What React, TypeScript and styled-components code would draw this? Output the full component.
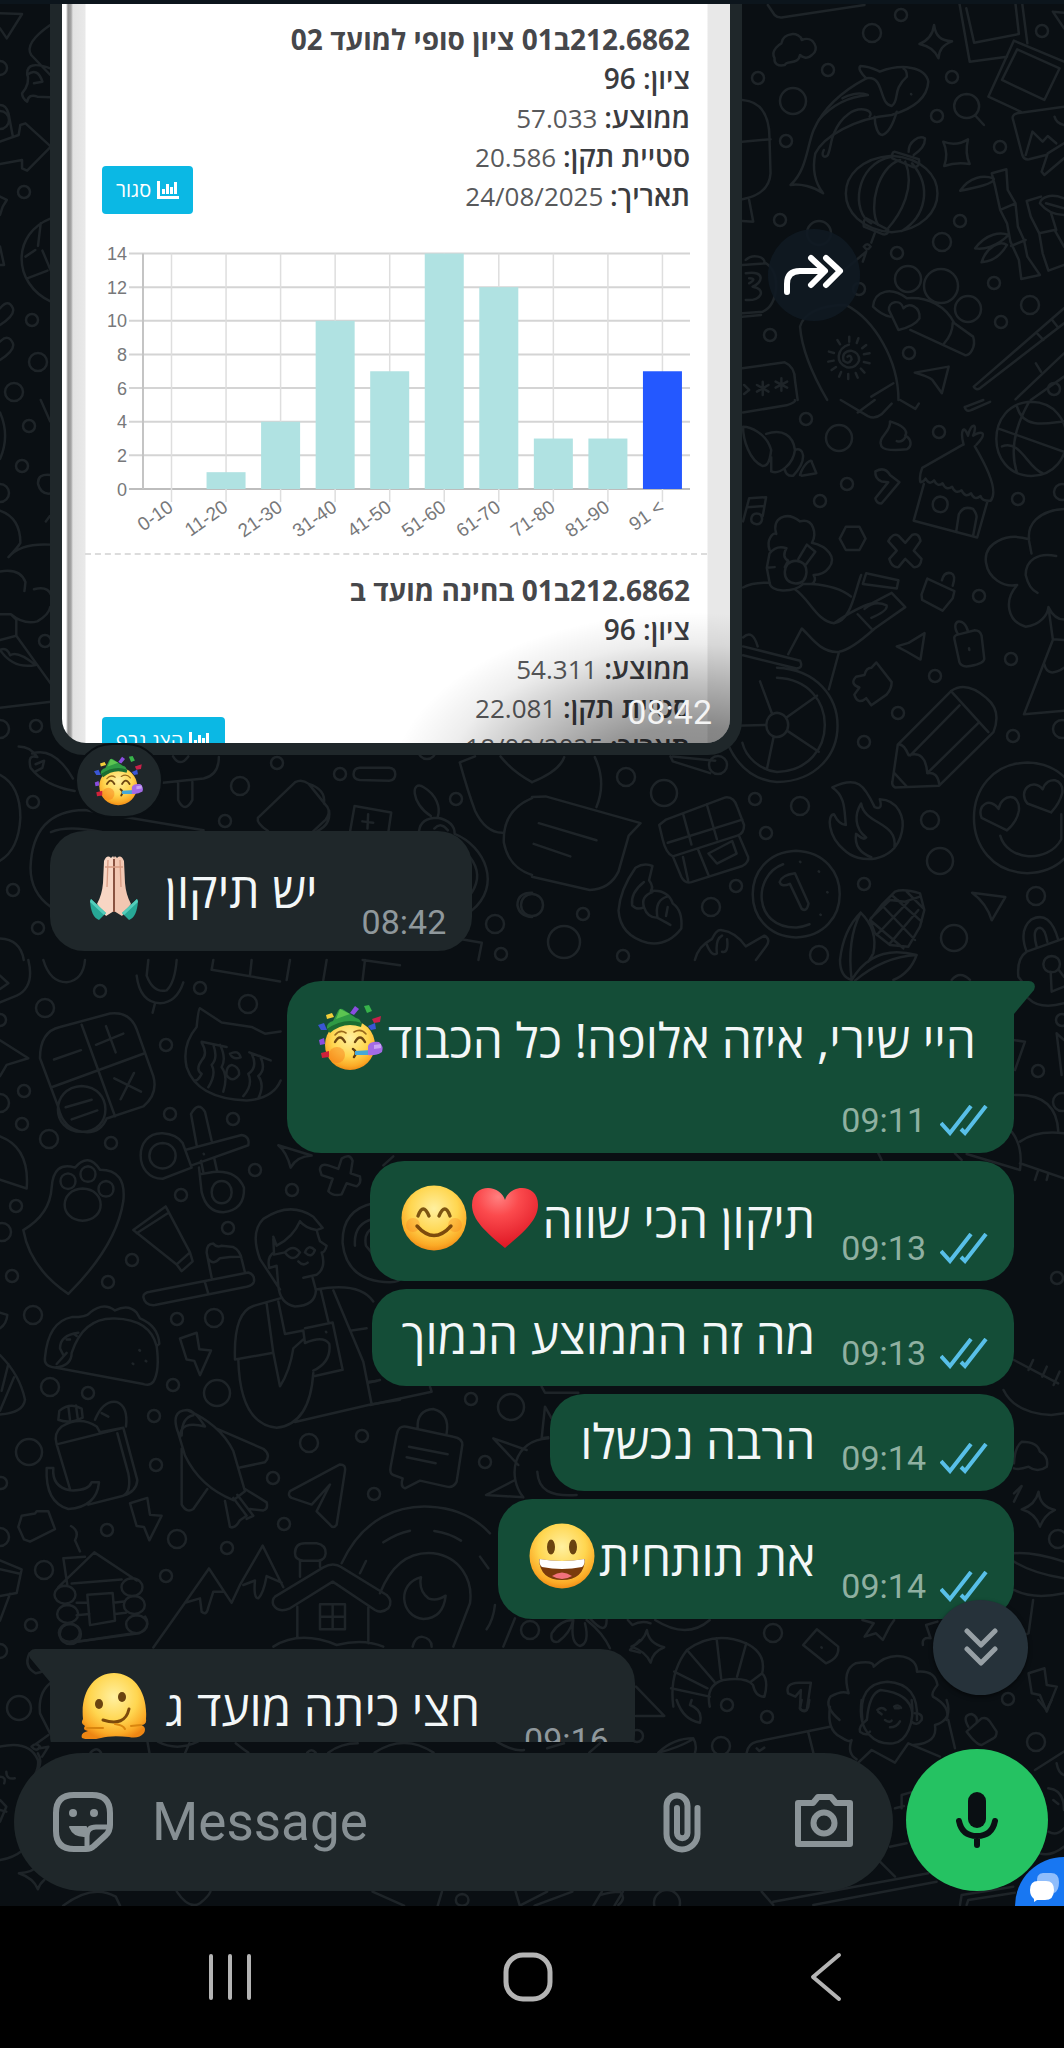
import React from "react";
import styled, { createGlobalStyle, css } from "styled-components";

const GlobalStyle = createGlobalStyle`
  *, *::before, *::after { box-sizing: border-box; }
  html, body { margin: 0; padding: 0; background: #000; }
  button { border: 0; padding: 0; margin: 0; background: none; cursor: pointer; font: inherit; color: inherit; }
`;

const HEBREW = '"Open Sans", "Noto Sans", "DejaVu Sans", sans-serif';
const LATIN = 'Roboto, "Noto Sans", sans-serif';

/* ---------- shell ---------- */

const Screen = styled.div`
  display: flex;
  flex-direction: column;
  height: 100vh;
  background: #0a0f13;
  font-family: ${LATIN};
  overflow: hidden;
`;

const Conversation = styled.main`
  position: relative;
  isolation: isolate;
  flex: 1;
  min-height: 0;
  display: flex;
  flex-direction: column;
  overflow: hidden;
  border-top: 4px solid #0c151c;
`;

const WallpaperSvg = styled.svg`
  position: absolute;
  z-index: -1;
  left: 0;
  top: -4px;
  width: 1064px;
  height: 1910px;
  fill: none;
  stroke: #1e2428;
  stroke-width: 2.5;
  stroke-linecap: round;
  stroke-linejoin: round;
  path, rect, ellipse, circle { vector-effect: non-scaling-stroke; }
`;

const MessageList = styled.section`
  position: relative;
  flex: 1;
  min-height: 0;
  overflow: hidden;
  padding: 0 50px;
  display: flex;
  flex-direction: column;
`;

const Row = styled.div<{ $out?: boolean; $space?: number }>`
  display: flex;
  flex: none;
  justify-content: ${(p) => (p.$out ? "flex-end" : "flex-start")};
  margin-top: ${(p) => p.$space ?? 8}px;
`;

/* ---------- bubbles ---------- */

const Bubble = styled.div<{ $out?: boolean; $stack?: boolean; $tail?: boolean }>`
  position: relative;
  display: flex;
  flex-direction: ${(p) => (p.$stack ? "column" : "row")};
  align-items: flex-end;
  gap: ${(p) => (p.$stack ? 22 : p.$out ? 26 : 44)}px;
  padding: 14px 26px ${(p) => (p.$out ? 18 : 14)}px 30px;
  border-radius: 34px;
  background: ${(p) => (p.$out ? "#144d37" : "#1f272a")};
  ${(p) => p.$tail && (p.$out
    ? css`border-top-right-radius: 0;`
    : css`border-top-left-radius: 0;`)}
`;

const Tail = styled.svg<{ $out?: boolean }>`
  position: absolute;
  top: 0;
  width: 21px;
  height: 33px;
  ${(p) => (p.$out ? "left: 100%; fill: #144d37;" : "right: 100%; fill: #1f272a; transform: scaleX(-1);")}
`;

const Text = styled.p<{ $out?: boolean; $stack?: boolean }>`
  margin: 0;
  padding: 0 ${(p) => (p.$stack ? 12 : 0)}px ${(p) => (p.$out ? 0 : 4)}px 0;
  display: flex;
  align-items: center;
  direction: rtl;
  font-family: ${HEBREW};
  font-size: 48px;
  line-height: 65px;
  color: #f3f7f8;
  white-space: pre;
`;

const EmojiSvg = styled.svg<{ $size?: number }>`
  flex: none;
  display: block;
  width: ${(p) => p.$size ?? 66}px;
  height: ${(p) => p.$size ?? 66}px;
`;

const EmojiSlot = styled.span<{ $apart?: boolean }>`
  display: block;
  margin: 10px ${(p) => (p.$apart ? 18 : 4)}px 12px 1px;
`;

const Meta = styled.span<{ $out?: boolean }>`
  display: flex;
  align-items: center;
  gap: 14px;
  height: 30px;
  font-size: 34px;
  line-height: 30px;
  color: ${(p) => (p.$out ? "#8fb0a1" : "#8f989c")};
`;

const TickSvg = styled.svg`
  width: 48px;
  height: 31px;
  fill: none;
  stroke: #58bfe8;
  stroke-width: 4;
`;

/* ---------- shared picture ---------- */

const PhotoBubble = styled.div`
  position: relative;
  flex: 0 1 692px;
  padding: 0 12px 12px;
  background: #1f272a;
  border-radius: 0 0 34px 34px;
`;

const Photo = styled.div`
  position: relative;
  height: 739px;
  overflow: hidden;
  border-radius: 0 0 24px 24px;
  background: linear-gradient(90deg, #fff 4px, #8f8f8f 6px, #a4a4a4 9px, #e2e2e2 11px, #e9e9e9 23px, #fff 24px, #fff calc(100% - 23px), #e8e8e8 calc(100% - 22px));
`;

const Shade = styled.div`
  position: absolute;
  inset: 0;
  background: radial-gradient(ellipse 300px 175px at 94% 106%, rgba(0, 0, 0, 0.48) 0%, rgba(0, 0, 0, 0.42) 35%, rgba(0, 0, 0, 0.24) 60%, rgba(0, 0, 0, 0.07) 82%, rgba(0, 0, 0, 0) 100%);
`;

const PhotoTime = styled.span`
  position: absolute;
  right: 18px;
  bottom: 13px;
  font-size: 34px;
  line-height: 36px;
  color: #f4f4f4;
`;

const Grade = styled.div`
  display: flex;
  direction: rtl;
  justify-content: space-between;
  align-items: flex-end;
  padding: 16px 40px 0;
`;

const GradeText = styled.div`
  font-family: ${HEBREW};
  font-size: 26px;
  line-height: 39px;
  color: #58595b;
  white-space: nowrap;
`;

const GradeTitle = styled.h2`
  margin: 0;
  height: 39px;
  font-size: 28px;
  font-weight: 700;
  color: #46474a;
`;

const GradeLine = styled.p<{ $strong?: boolean }>`
  margin: 0;
  height: 39px;
  font-size: ${(p) => (p.$strong ? 28 : 26)}px;
  font-weight: ${(p) => (p.$strong ? 600 : 400)};
  color: ${(p) => (p.$strong ? "#3b3c3f" : "#58595b")};
  b { font-size: 28px; font-weight: 600; color: #3b3c3f; }
`;

const GraphButton = styled.button`
  display: flex;
  align-items: center;
  gap: 6px;
  height: 48px;
  padding: 0 14px;
  margin-bottom: 1px;
  border-radius: 4px;
  background: #0bb8e4;
  color: #fff;
  font-family: ${HEBREW};
  font-size: 20px;
  line-height: 24px;
  svg { width: 22px; height: 18px; fill: #fff; }
`;

const ChartSvg = styled.svg`
  display: block;
  width: 100%;
  height: 338px;
  font-family: "Liberation Sans", Arial, sans-serif;
  font-size: 18px;
  text { fill: #77787a; text-anchor: end; }
`;

const Divider = styled.hr`
  margin: 0 23px;
  border: 0;
  border-top: 2px dashed #dcdcdc;
`;

const Reaction = styled.button`
  position: absolute;
  left: 25px;
  bottom: -63px;
  display: grid;
  place-items: center;
  width: 88px;
  height: 75px;
  border: 2px solid #0a0f13;
  border-radius: 37px;
  background: #1f272a;
`;

const ForwardButton = styled.button`
  display: grid;
  place-items: center;
  width: 92px;
  height: 92px;
  margin: 225px 0 0 26px;
  border-radius: 50%;
  background: rgba(15, 25, 34, 0.9);
  svg { width: 62px; height: 42px; fill: none; stroke: #fff; stroke-width: 6; stroke-linecap: round; stroke-linejoin: round; }
`;

const ScrollDown = styled.button`
  position: absolute;
  right: 36px;
  bottom: 47px;
  display: grid;
  place-items: center;
  width: 95px;
  height: 95px;
  border-radius: 50%;
  background: #26323a;
  box-shadow: 0 2px 4px rgba(0, 0, 0, 0.5);
  svg { width: 36px; height: 40px; fill: none; stroke: #97a0a5; stroke-width: 5; stroke-linecap: round; stroke-linejoin: round; }
`;

/* ---------- composer ---------- */

const Composer = styled.form`
  display: flex;
  align-items: flex-end;
  gap: 13px;
  padding: 7px 16px 15px 14px;
`;

const Field = styled.div`
  flex: 1;
  min-width: 0;
  display: flex;
  align-items: center;
  height: 138px;
  padding: 0 38px;
  border-radius: 69px;
  background: #1f272a;
`;

const IconButton = styled.button<{ $gap?: number }>`
  flex: none;
  display: grid;
  place-items: center;
  margin-left: ${(p) => p.$gap ?? 0}px;
  svg { display: block; width: 62px; height: 62px; fill: none; stroke: #8b9498; stroke-width: 6; stroke-linecap: round; stroke-linejoin: round; }
`;

const MessageInput = styled.input`
  flex: 1;
  min-width: 0;
  height: 80px;
  margin-left: 38px;
  padding: 0;
  border: 0;
  outline: 0;
  background: transparent;
  font-family: ${LATIN};
  font-size: 53px;
  line-height: 64px;
  color: #f3f7f8;
  &::placeholder { color: #868f93; opacity: 1; }
`;

const MicButton = styled.button`
  flex: none;
  display: grid;
  place-items: center;
  width: 142px;
  height: 142px;
  border-radius: 50%;
  background: #25c262;
  svg { width: 42px; height: 58px; fill: none; stroke: #0a0f13; stroke-width: 6; stroke-linecap: round; }
`;

const ChatHead = styled.button`
  position: absolute;
  right: -49px;
  bottom: -49px;
  width: 98px;
  height: 98px;
  border-radius: 50%;
  background: #1877f2;
  svg { display: block; margin: -34px 0 0 14px; width: 32px; height: 32px; }
`;

const NavBar = styled.nav`
  display: flex;
  justify-content: space-around;
  align-items: center;
  height: 142px;
  padding: 0 89px 0 82px;
  background: #000;
`;

const NavButton = styled.button`
  display: grid;
  place-items: center;
  width: 120px;
  height: 90px;
  svg { width: 52px; height: 52px; fill: none; stroke: #b4b4b4; stroke-width: 4; stroke-linecap: round; stroke-linejoin: round; }
`;

/* ---------- emoji ---------- */

const faceFill = (id: string) => (
  <defs>
    <radialGradient id={id} cx="50%" cy="36%" r="66%">
      <stop offset="0" stopColor="#fff0a0" />
      <stop offset="0.55" stopColor="#ffd650" />
      <stop offset="0.85" stopColor="#fbaa26" />
      <stop offset="1" stopColor="#ee8613" />
    </radialGradient>
  </defs>
);

const Party = ({ id, size }: { id: string; size?: number }) => (
  <EmojiSvg $size={size} viewBox="0 0 66 66" role="img" aria-label="partying face">
    {faceFill(id)}
    <circle cx="32" cy="40" r="25" fill={`url(#${id})`} />
    <circle cx="19" cy="50" r="8" fill="#f7791b" opacity="0.45" />
    <path d="M9 24 Q8 18 15 16 L20 6 Q22 2 26 5 L38 13 Q43 14 43 19 Q26 15 9 24Z" fill="#2f9a44" />
    <path d="M9 24 Q26 12 44 18 L43 22 Q26 16 12 28Z" fill="#1c6d31" />
    <path d="M22 4 L32 9 L18 14Z" fill="#5cc451" />
    <path d="M17 30 Q22 24 28 28 M36 27 Q43 23 48 29" fill="none" stroke="#9a6a1c" strokeWidth="1.6" strokeLinecap="round" />
    <path d="M17 37 Q22 28 27 37 M37 37 Q42 28 47 37" fill="none" stroke="#6e4712" strokeWidth="2.4" strokeLinecap="round" />
    <path d="M35 44 Q40 47 36 52" fill="none" stroke="#5f3a0e" strokeWidth="2.5" strokeLinecap="round" />
    <path d="M37 46 L54 45 L54 50 L37 50Z" fill="#46a8d8" />
    <path d="M50 41 Q52 36 61 37 Q66 41 64 47 Q58 51 50 50Z" fill="#a36be6" />
    <path d="M56 40 L63 39 L63 43 L56 44Z" fill="#c9a2f7" />
    <path d="M32 8 L37 1 L41 4 L36 10Z" fill="#8a4de0" />
    <path d="M46 1 L51 0 L54 6 L49 8Z" fill="#37b34a" />
    <path d="M54 14 L63 11 L62 17 L56 18Z" fill="#c9204a" />
    <path d="M50 21 L57 18 L58 24 L53 25Z" fill="#3a56d4" />
    <path d="M0 20 L6 18 L9 25 L3 25Z" fill="#3a56d4" />
    <path d="M1 35 L6 33 L7 39 L2 40Z" fill="#8a4de0" />
    <path d="M3 48 L11 46 L11 52 L4 53Z" fill="#d0213a" />
    <path d="M8 10 L14 8 L16 12 L9 14Z" fill="#f3cf3a" />
  </EmojiSvg>
);

const Pray = () => (
  <EmojiSvg viewBox="0 0 66 66" role="img" aria-label="folded hands">
    <path d="M30 3 Q33 -1 33 4 L33 56 L25 61 L16 49 Q21 40 22 28 L23 6 Q26 -1 30 3Z" fill="#f8d6c4" />
    <path d="M36 3 Q33 -1 33 4 L33 56 L41 61 L50 49 Q45 40 44 28 L43 6 Q40 -1 36 3Z" fill="#f2c7b2" />
    <path d="M33 4 L33 57" stroke="#8a5240" strokeWidth="2" />
    <path d="M27 5 L26 32 M39 5 L40 32 M24 12 L33 12 L42 12" stroke="#d89c83" strokeWidth="1.3" fill="none" />
    <path d="M10 44 L25 58 L18 65 Q10 62 9 46Z" fill="#27a896" />
    <path d="M56 44 L41 58 L48 65 Q56 62 57 46Z" fill="#27a896" />
    <path d="M10 44 L25 58 L23 60 L9 47Z M56 44 L41 58 L43 60 L57 47Z" fill="#54cdbb" />
  </EmojiSvg>
);

const Smile = () => (
  <EmojiSvg viewBox="0 0 66 66" role="img" aria-label="smiling face with smiling eyes">
    {faceFill("smile")}
    <circle cx="33" cy="33" r="32.5" fill="url(#smile)" />
    <circle cx="12" cy="40" r="7" fill="#f7791b" opacity="0.3" />
    <circle cx="54" cy="40" r="7" fill="#f7791b" opacity="0.3" />
    <path d="M17 31 Q22 17 28 31 M38 31 Q44 17 49 31" fill="none" stroke="#7c5411" strokeWidth="3.4" strokeLinecap="round" />
    <path d="M16 41 Q33 60 50 41" fill="none" stroke="#7c4a0c" strokeWidth="3.4" strokeLinecap="round" />
  </EmojiSvg>
);

const Heart = () => (
  <EmojiSvg viewBox="0 0 66 66" role="img" aria-label="red heart">
    <defs>
      <radialGradient id="heart" cx="40%" cy="15%" r="90%">
        <stop offset="0" stopColor="#ff8080" />
        <stop offset="0.35" stopColor="#fb4a4d" />
        <stop offset="1" stopColor="#dc1220" />
      </radialGradient>
    </defs>
    <path d="M33 63 C14 47 0 35 0 20 C0 8 8 3 16 3 C24 3 31 8 33 15 C35 8 42 3 50 3 C58 3 66 8 66 20 C66 35 52 47 33 63Z" fill="url(#heart)" />
  </EmojiSvg>
);

const Grin = () => (
  <EmojiSvg viewBox="0 0 66 66" role="img" aria-label="grinning face">
    {faceFill("grin")}
    <circle cx="33" cy="33" r="32.5" fill="url(#grin)" />
    <ellipse cx="22" cy="24" rx="4" ry="7.5" fill="#6a4310" />
    <ellipse cx="44" cy="24" rx="4" ry="7.5" fill="#6a4310" />
    <path d="M10 36 Q33 40 56 36 Q55 57 33 57 Q11 57 10 36Z" fill="#7a3a0c" />
    <path d="M10.500 36 Q33 40 55.500 36 Q56 42 53 44 Q33 48 13 44 Q10 42 10.500 36Z" fill="#fff" />
    <path d="M23 53 Q33 46 43 53 Q33 59 23 53Z" fill="#f2727c" />
  </EmojiSvg>
);

const Melting = () => (
  <EmojiSvg viewBox="0 0 66 66" role="img" aria-label="melting face">
    {faceFill("melt")}
    <path d="M2 46 C-1 18 14 0 33 0 C52 0 67 18 65 46 Q66 52 60 52 Q66 54 63 60 Q58 66 48 64 Q30 62 20 65 Q8 68 1 65 Q-1 60 7 58 Q1 57 4 53 Q-1 51 2 46Z" fill="url(#melt)" />
    <ellipse cx="18" cy="31" rx="4" ry="5" fill="#6a4310" />
    <ellipse cx="41" cy="24" rx="4" ry="5" fill="#6a4310" />
    <path d="M22 47 Q44 54 48 36" fill="none" stroke="#7c4a0c" strokeWidth="3" strokeLinecap="round" />
    <path d="M34 51 Q42 52 44 56 M6 55 L22 55 M50 53 L60 52" fill="none" stroke="#d9860f" strokeWidth="2" strokeLinecap="round" />
  </EmojiSvg>
);

const Ticks = () => (
  <TickSvg viewBox="0 0 48 31" role="img" aria-label="Read">
    <path d="M1 18 L10 28 L31 1 M21 24 L25 28 L46 1" />
  </TickSvg>
);

/* ---------- wallpaper ---------- */

const rings: [number, number, number][] = [
  [901,15,6],[872,33,9],[828,70,6],[758,78,6],[793,101,13],[786,141,6],[937,116,6],[952,77,6],[1042,31,6],[1000,147,6],[960,221,6],[942,242,9],[897,253,6],[780,220,6],[819,233,12],[994,283,6],[1030,305,9],[1001,322,6],[909,353,6],[770,335,6],[1054,389,6],[859,289,6],[908,279,13],[941,286,17],[968,309,13],
  [806,419,6],[839,438,13],[939,432,6],[847,484,6],[820,501,6],[1018,499,6],[979,596,6],[1011,659,6],[935,676,6],[898,713,6],[1013,736,6],[864,742,6],[626,777,9],[664,793,13],[755,799,6],[800,806,9],[766,833,6],[930,820,9],[940,861,13],[864,884,6],[736,886,6],[711,907,9],[583,914,6],[564,942,16],[532,905,11],[1036,896,9],[954,938,13],[623,956,6],[819,955,9],[718,765,9],[1062,729,9],[1062,492,8],
  [29,426,6],[22,466,6],[45,641,6],[36,726,6],[33,802,6],[13,890,6],[38,928,6],[240,786,9],[277,763,6],[225,821,6],[340,774,6],[456,799,6],[495,924,9],[501,954,6],[427,750,9],[0,493,9],[0,729,9],
  [24,192,6],[32,320,6],[38,362,9],[14,392,9],[0,120,9],[0,68,7],
  [100,991,6],[200,988,6],[45,1008,9],[248,1004,9],[166,1045,6],[24,1091,6],[22,1124,6],[49,1139,9],[111,1143,6],[170,1114,6],[233,1119,6],[255,1170,6],[181,1195,6],[292,1190,6],[228,1228,6],[132,1260,6],[12,1276,6],[108,1282,6],[33,1315,9],[16,1206,6],[177,1319,6],[214,1318,9],[50,1387,9],[88,1393,6],[173,1385,6],[217,1393,13],[154,1416,6],[156,1465,6],[29,1452,13],[309,1443,9],[362,1436,6],[273,1478,6],[284,1524,6],[374,1494,6],[107,1530,6],[177,1539,9],[227,1548,6],[44,1570,9],[166,1576,6],[31,1625,6],[2,1232,9],[0,1103,9],[0,1020,6],[1,1483,6],[0,1537,9],[0,1651,7],
  [471,1399,6],[511,1407,13],[485,1462,6],[530,1630,9],[773,1633,9],[727,1705,6],[1008,1699,6],[767,1717,6],[721,1746,9],[1036,1742,9],[667,1903,13],[637,1736,6],[19,1708,12],[1038,1071,6],[1062,1020,6],[1062,1102,9],[1058,1539,9],[1057,1278,6],
];

type Patch = { t: string; d: string[] };

const patches: Patch[] = [
  {
    t: "scale(0.3393 0.3333)",
    d: [
      "M0 40 L65 42 L20 115 L0 85",
      "M148 75 Q70 130 92 165 L148 225 M148 205 Q80 180 80 220 Q90 250 65 280 Q65 295 80 305 Q85 280 110 290 L148 292 M80 225 Q110 200 125 245 L100 250",
      "M0 315 Q18 315 25 340 L38 410 M0 425 L55 405 L60 375 L75 370 L150 440 L80 512 L65 505 L65 480 L0 492",
      "M0 590 L20 600 L8 620 L0 645 M0 740 L12 795 L0 795",
      "M150 655 C35 700 35 850 150 905 M120 670 L112 738 M75 770 L104 750 M125 752 L150 812 M80 835 L140 812",
      "M0 925 Q25 895 38 925 Q45 945 0 975 M0 1025 Q25 1000 38 1030 Q45 1050 0 1080",
    ],
  },
  {
    t: "translate(532 0) scale(0.3393 0.3333)",
    d: [
      "M695 15 L715 45 Q725 55 740 52 L980 15",
      "M715 175 C700 150 735 130 735 130 C740 95 790 95 795 120 C830 105 850 150 825 165 C810 180 795 170 790 165 C785 195 750 180 745 195 C725 200 712 190 715 175",
      "M1185 75 C1190 110 1205 122 1238 124 C1210 135 1200 150 1198 175 C1188 150 1170 138 1142 132 C1170 120 1182 100 1185 75Z",
      "M968 198 C1000 200 1010 208 1025 215 C1090 190 1160 200 1168 245 C1165 300 1110 330 1060 345 C950 355 860 410 835 460 C825 510 835 550 858 580 C830 560 790 550 762 555 C810 510 810 440 830 390 C860 320 920 270 985 235 C970 220 960 205 968 198Z",
      "M1010 350 C1010 380 1020 405 1032 405 C1050 400 1065 370 1075 335 M860 450 C850 470 865 475 872 465 C882 440 880 420 890 400 C910 350 950 320 985 330 C1000 335 1000 345 995 350 M845 360 C880 320 930 290 990 285 C960 275 930 285 915 295 M985 235 C1040 225 1020 310 1060 318 C1085 300 1060 270 1105 230 Q1105 210 1095 206 M1117 282 l1 1",
      "M1060 467 C1240 480 1240 680 1060 697 C880 680 880 480 1060 467 M1060 470 C950 490 940 640 1000 670 M1085 480 C1020 500 990 620 1020 675 M1100 485 C1130 560 1090 640 1045 690 M1120 490 C1180 560 1160 650 1090 693",
      "M1068 455 L1140 478 Q1145 500 1125 502 L1062 475 Q1060 455 1068 455Z M985 655 L1050 690 Q1050 705 1035 703 L978 680Q975 660 985 655Z M1110 455 C1110 425 1140 405 1158 415 C1160 440 1140 455 1125 465 M1010 700 L1000 728 M985 755 L915 815 M978 740 q10 -15 20 0 q-10 15 -20 0 M985 755 L975 785",
      "M1260 12 L1290 185 L1400 170 M1280 25 L1303 128 L1435 102 L1425 12 M1445 12 L1460 130 M1568 185 L1420 122 L1345 290 L1440 335 M1430 148 L1555 205 L1510 300 L1385 240 Z M1568 320 L1430 340 Q1412 345 1418 360 L1445 465 Q1450 480 1465 478 L1515 465 M1455 465 L1475 395 L1505 425 L1520 408 L1545 430 M1568 475 L1510 525 L1502 515 L1520 460 L1568 430 M1535 35 L1568 85 M1535 35 L1568 38 M1540 350 Q1545 370 1568 375",
      "M1281 282 C1330 285 1330 352 1281 354 C1232 352 1232 285 1281 282 M1305 345 L1332 375",
      "M1212 425 Q1250 440 1285 418 Q1275 460 1290 492 Q1250 485 1215 498 Q1228 460 1212 425Z",
      "M1355 520 L1398 508 L1402 570 L1425 610 L1432 680 L1450 720 L1460 770 L1497 825 L1442 837 L1435 780 L1410 725 L1400 670 L1380 630 L1365 560Z M1380 630 L1425 610 M1412 738 L1455 720 M1262 572 C1290 530 1330 525 1360 535 C1370 550 1300 565 1262 572 M1306 745 C1340 700 1380 695 1405 705 C1370 740 1330 750 1306 745 M1325 787 C1340 740 1380 720 1400 735 C1380 770 1350 785 1325 787",
      "M1458 603 L1500 590 M1458 603 L1470 650 L1495 700 L1505 760 L1522 812 L1568 795 M1495 700 L1540 690 L1568 740 M1568 595 C1530 580 1500 590 1497 610 C1520 640 1550 645 1568 645 M1515 610 L1568 625 M1530 640 L1545 690",
      "M1005 920 C1010 870 1060 860 1105 895 C1170 890 1220 920 1245 970 L1300 1010 C1310 1040 1290 1070 1275 1065 L1115 990 M1215 1030 Q1240 1000 1240 968 M1005 920 Q1030 945 1055 950 M1080 990 L1052 930 C1050 905 1085 895 1095 925 C1110 905 1145 920 1142 955 C1130 975 1100 985 1080 990Z",
      "M790 980 C800 940 850 915 925 915 C1010 960 1080 1080 1080 1200 M790 980 C795 1050 830 1130 870 1200 M1000 1190 L1065 1150 M930 1070 q10 -8 12 8 q-8 18 -24 4 q-6 -28 22 -30 q26 6 24 30 q-10 24 -36 20 q-26 -10 -24 -34 q4 -26 30 -34 M935 1010 l0 15 M962 1015 l-5 14 M985 1035 l-12 10 M995 1060 l-17 3 M995 1090 l-17 -4 M980 1118 l-11 -12 M960 1133 l-6 -14 M932 1137 l0 -15 M905 1130 l6 -14 M883 1110 l13 -9 M873 1085 l16 -3 M875 1055 l15 4 M900 1020 l8 13",
      "M1302 1160 L1568 925 M1302 1160 Q1308 1172 1320 1165 L1568 970 M1490 1002 L1507 1020 M1535 962 L1550 982 M1425 1198 L1568 1060 M1470 1200 L1568 1130 M1485 1090 L1500 1115",
      "M1128 1118 L1228 1100 L1208 1180 L1180 1140 Q1170 1130 1128 1118Z",
      "M620 300 C680 305 700 350 700 415 L703 520 C700 570 660 590 620 598 M620 425 L703 418 M640 600 L652 665 L620 663 M630 780 C650 760 690 770 685 790 M620 795 L690 790 Q720 810 720 860 Q715 920 680 935 L620 940 M620 950 L675 945 M630 820 C690 810 680 850 650 860 C690 865 680 905 630 900 M640 835 Q665 835 640 850",
      "M620 1105 L745 1087 Q775 1100 775 1140 L783 1200 M680 1145 L680 1185 M663 1155 L697 1175 M663 1175 L697 1155 M735 1135 L735 1172 M718 1145 L752 1163 M718 1163 L752 1145 M625 1155 L640 1170 L625 1182",
    ],
  },
  {
    t: "translate(532 400) scale(0.3393 0.3571)",
    d: [
      "M622 35 L750 15 Q780 5 775 0 M910 0 L990 45 Q1010 55 1030 40 L1060 10 M960 35 L1010 0 M1085 0 L1130 25 L1140 10 M1275 20 L1330 0 M1275 20 Q1280 35 1295 28 L1350 5",
      "M622 75 C640 75 690 90 705 140 C700 180 690 185 680 185 C640 170 622 110 622 75 M690 95 C740 80 770 100 775 140 C770 180 730 210 705 200 L705 160 M775 140 C800 130 815 165 770 212 Q750 215 745 195 M790 210 C800 180 825 160 825 175 L838 205 L795 212",
      "M1030 130 C1015 105 1060 90 1055 60 C1090 70 1110 85 1100 100 C1120 110 1120 130 1105 138 C1070 142 1040 142 1030 130 M1100 105 Q1090 120 1075 115",
      "M1012 200 Q1040 185 1055 210 L1083 230 L1030 290 Q1015 290 1012 275 L1050 230 L1030 228 Q1010 220 1012 200",
      "M622 340 L640 275 L690 272 L680 325 M635 300 L685 297 M662 318 q16 0 16 16 q-2 14 -16 14 q-16 -2 -16 -14 q2 -16 16 -16",
      "M1270 125 L1150 190 Q1140 215 1145 230 q10 0 15 -10 q10 20 25 5 q10 20 25 8 q10 22 28 10 q10 22 28 10 q10 22 28 8 q10 22 28 8 q5 15 30 13 Q1380 250 1305 130 M1155 235 L1125 338 L1312 385 L1342 285 M1250 370 L1258 320 Q1270 295 1300 305 Q1312 320 1310 330 L1300 380 M1203 270 q22 2 22 22 q-2 22 -22 22 q-22 -2 -22 -22 q2 -20 22 -22 M1272 125 C1260 80 1275 70 1285 100 C1295 60 1315 65 1300 100 C1325 85 1345 90 1310 125",
      "M1472 5 C1610 8 1610 210 1472 213 C1334 210 1334 8 1472 5 M1375 80 L1568 145 M1430 20 C1450 90 1540 60 1568 60 M1385 130 C1440 110 1460 190 1505 205 M1465 5 C1420 80 1410 150 1430 205",
      "M925 355 L965 355 L983 388 L965 420 L925 420 L907 388Z",
      "M1050 395 Q1065 370 1080 380 L1100 400 L1120 378 Q1140 370 1145 395 L1125 422 L1148 445 Q1145 470 1125 468 L1100 445 L1080 468 Q1060 470 1053 445 L1075 422Z",
      "M1568 305 C1490 310 1460 350 1465 390 C1400 370 1330 400 1338 455 C1345 500 1390 525 1430 518 C1390 560 1400 620 1455 635 C1500 630 1520 600 1522 580 C1535 605 1550 615 1568 615 M1465 395 L1472 430 M1545 437 C1490 425 1455 450 1455 490 Q1465 530 1490 540 M1522 580 L1535 670 L1568 672 M1535 672 L1450 880 L1568 870 M1510 740 Q1520 780 1568 750",
      "M1148 545 L1165 500 L1245 535 L1240 555 L1210 590 L1150 560Z M1208 505 Q1215 480 1235 485 Q1250 490 1240 520",
      "M1245 670 Q1242 660 1255 657 L1305 645 Q1320 645 1325 660 L1333 725 Q1330 740 1280 746 Q1265 745 1260 735Z M1255 655 C1230 615 1275 605 1285 648 M1288 695 l1 5",
      "M1075 690 L1110 680 L1157 653 L1145 727 L1105 705Z",
      "M955 775 L980 770 Q985 750 1000 750 L1015 735 L1060 790 Q1060 810 1045 825 L1000 855 L985 835 Q960 855 950 825 L965 805 Q935 795 955 775Z",
      "M700 420 C690 390 710 370 720 375 C705 330 750 310 790 340 C830 330 840 375 825 400 C870 410 900 440 875 470 C860 490 840 490 830 490 Q840 505 825 515 L800 515 C770 540 700 540 700 510 L692 470 L700 430 Q720 405 750 415 Q735 440 755 450 L745 468 M692 470 L715 468 M777 450 q32 2 32 32 q-2 32 -32 32 q-32 -2 -32 -32 q2 -30 32 -32 M785 445 L810 405 L835 425 L808 460",
      "M622 525 Q650 510 700 512 M775 530 C820 560 840 620 890 625 C940 620 950 540 970 490 M825 515 Q900 520 940 550 M985 485 L1080 505 L1075 528 L975 515Z M890 625 Q960 580 1000 570 L1060 540 L1100 580 L1010 640 Q940 700 905 705 C850 710 820 660 795 640 L755 712 M905 705 L875 810 M960 600 L1000 640 M980 585 Q1010 560 1045 575 Q1050 590 1000 610",
      "M622 690 L790 730 Q800 750 780 752 L622 715 M622 665 Q650 640 665 690 M722 750 C960 760 960 1065 722 1070 C660 1065 610 1030 580 970 M722 778 C910 785 910 1035 722 1042 C670 1035 630 1000 620 960 M722 876 C766 880 766 940 722 944 C680 940 680 880 722 876 M672 788 L708 880 M840 828 L752 888 M755 928 L845 985 M712 944 L692 1035 M600 912 L690 910",
      "M1235 815 Q1280 785 1340 835 Q1385 870 1360 930 L1200 1080 L1070 1085 Q1060 1080 1062 1070 L1078 965 Z M1235 815 L1345 930 M1078 965 Q1095 960 1110 995 Q1160 980 1165 1045 Q1195 1040 1200 1075 M1115 995 L1260 855 M1165 1045 L1315 905 M1068 1045 L1105 1083",
      "M885 1085 C960 1050 980 1080 1010 1140 Q1035 1150 1025 1118 C1080 1120 1100 1170 1090 1210 C1070 1300 960 1300 920 1260 C870 1220 870 1160 890 1160 Q905 1190 925 1190 C920 1150 925 1110 885 1085 M970 1130 C980 1190 1080 1180 1068 1255 M970 1130 C950 1160 950 1200 985 1225 C975 1235 965 1220 955 1215 C950 1250 970 1270 1000 1280",
      "M1460 1015 C1670 1020 1670 1320 1460 1325 C1250 1320 1250 1020 1460 1015 M1400 1205 L1325 1170 C1310 1135 1350 1110 1375 1145 C1385 1100 1440 1100 1435 1150 Q1430 1180 1400 1205 M1530 1155 L1460 1130 C1430 1095 1475 1055 1505 1090 C1520 1050 1568 1060 1563 1100 Q1555 1130 1530 1155 M1380 1220 C1400 1290 1520 1300 1560 1230 L1560 1160",
      "M395 1175 L570 1113 Q595 1110 605 1140 L625 1190 Q625 1215 605 1220 L415 1278 Q395 1270 385 1230 L375 1190 Z M400 1240 L620 1175 M445 1158 L470 1245 M515 1132 L545 1230 M415 1278 L440 1335 Q450 1355 470 1350 L620 1305 Q640 1295 637 1280 L610 1220 M445 1280 L460 1345 M490 1260 L520 1330 M520 1270 L590 1235 L603 1270 L545 1298 Z",
      "M0 1112 L40 1110 L320 1185 L285 1220 L255 1320 Q230 1370 170 1372 L0 1335 M20 1185 L190 1233 M5 1243 L113 1278 M185 1000 Q220 1070 190 1140 M95 1000 Q80 1040 0 1070 M408 998 L415 1012 L525 1045 M415 998 L540 1010",
      "M305 1310 Q330 1295 355 1305 L345 1345 Q360 1365 350 1375 Q400 1370 415 1410 Q445 1430 440 1480 Q400 1530 340 1520 Q260 1500 255 1430 Q260 1370 305 1310 M330 1350 Q290 1380 295 1415 Q310 1430 330 1420 Q320 1390 355 1378 M330 1420 Q340 1450 370 1450 Q360 1400 400 1390 M370 1450 Q400 1465 408 1470 M400 1420 L395 1445",
      "M778 1262 C950 1268 950 1500 778 1505 C608 1500 608 1268 778 1262 M740 1300 C650 1330 650 1480 780 1477 Q800 1475 818 1468 M730 1350 Q735 1330 775 1325 L815 1410 Q810 1435 795 1425 L760 1355 Q735 1365 730 1350 M790 1293 l1 1 M845 1320 l1 1 M870 1378 l1 1 M850 1441 l1 1",
      "M1297 1380 L1395 1392 L1355 1457 Q1340 1410 1297 1380Z",
      "M480 1568 Q490 1530 530 1510 Q545 1480 560 1485 Q600 1490 630 1530 L685 1500 Q705 1510 690 1530 L660 1568 M515 1525 Q530 1560 545 1550 Q540 1510 560 1500 M560 1545 Q580 1550 575 1510",
    ],
  },
  {
    t: "translate(0 400) scale(0.3393 0.3571)",
    d: [
      "M0 35 Q30 100 0 165 M120 0 L148 60 M150 210 Q110 205 112 235 Q120 265 148 262 M135 340 l12 -15",
      "M0 310 Q60 330 60 400 Q55 410 25 440 Q60 400 150 405 M0 480 Q60 470 75 510 L72 535 M100 530 Q140 520 150 545 M0 600 L32 600 Q70 630 110 620 Q145 600 148 580 M32 600 L48 615 L48 660 L150 795 M48 660 L0 672 M0 700 Q20 690 30 715 Q50 700 105 742 Q40 755 0 700 M0 862 L150 845",
      "M55 970 Q90 970 110 1000 Q80 990 90 1030 Q130 1080 220 1095 M95 990 Q160 970 215 1060 M105 1020 l25 -10 l-5 20 l-20 10",
      "M480 1072 L600 1060 Q645 1050 645 1000 M525 1070 L525 1120 Q545 1160 567 1120 L567 1070 M510 998 Q530 1030 555 998",
      "M760 1170 L870 1070 Q890 1060 910 1075 L965 1140 Q975 1155 960 1175 L915 1215 M760 1170 Q755 1185 790 1207 M910 1075 Q960 1090 955 1130 M970 1150 Q975 1190 935 1207",
      "M1060 1030 L1147 1030 Q1165 1032 1165 1048 Q1165 1064 1147 1066 L1060 1064 Q1042 1062 1042 1048 Q1042 1032 1060 1030Z",
      "M1032 1207 L1045 1137 L1153 1155 L1145 1207 M1085 1160 L1083 1200 M1068 1180 L1100 1184",
      "M1270 1165 C1210 1130 1210 1060 1250 1085 C1285 1105 1300 1140 1290 1168 M1235 1207 Q1240 1170 1290 1170 Q1340 1180 1340 1215 C1430 1250 1480 1360 1390 1430 M1385 1280 Q1425 1330 1390 1380 M1280 1200 q20 -20 40 5",
      "M1355 1015 Q1380 1100 1400 1150 Q1430 1210 1480 1212 M1355 1015 L1400 998 M1475 998 Q1510 1040 1568 1070 M1568 1115 Q1480 1150 1485 1240 Q1500 1310 1568 1330",
      "M90 1310 Q95 1150 250 1148 L350 1165 L600 1205 M90 1310 Q90 1380 150 1420 M150 1210 Q200 1190 300 1210 M0 1050 Q60 1080 60 1170 Q55 1260 0 1290 M1360 1510 L1420 1520 L1410 1568 M1568 1380 Q1525 1380 1525 1415 Q1530 1445 1568 1448 M0 1508 Q60 1510 70 1568",
    ],
  },
  {
    t: "translate(0 960) scale(0.3333 0.4464)",
    d: [
      "M85 0 Q105 60 50 80 L0 95 M0 35 L25 52 L0 65 M130 0 Q150 50 200 50 Q250 45 255 0 M445 0 L440 35 Q460 75 500 68 Q525 50 530 0 M410 35 Q420 95 480 97 Q530 95 550 50 M465 97 L458 118",
      "M640 0 L635 22 L840 48 M755 0 L750 35 M870 0 L860 45 M980 0 L970 45 M1095 0 L1088 45 M1088 0 L1200 12",
      "M120 220 Q120 160 180 150 L330 120 Q390 115 410 155 L460 260 Q475 300 430 328 L320 355 Q300 390 250 385 Q190 380 175 330 L120 220 M245 145 L345 350 M155 285 L430 210 M162 223 L243 202 M318 148 L347 207 M288 190 L370 165 M343 265 L423 295 M402 253 L362 312 M245 282 C340 285 340 385 245 385 C150 385 150 285 245 282 M197 330 L275 313 M215 357 L292 337",
      "M842 160 L795 165 L755 150 L665 140 L600 108 Q595 110 590 150 Q545 190 560 240 Q590 310 740 315 Q820 310 842 270 M605 183 L680 195 M605 185 q20 25 0 40 q-20 20 0 30 q-10 15 -20 15 M640 190 q15 30 -5 45 q15 20 -10 50 M660 190 q20 30 5 50 q20 20 5 55 M748 207 L812 225 M755 210 q20 30 -10 45 q15 25 -15 50 M780 215 q20 30 -5 45 q20 20 0 50 M690 210 Q715 200 722 218 Q700 225 690 210 M695 235 q25 5 22 22 q-20 20 -38 0 q0 -20 16 -22",
      "M0 180 L85 220 L20 235 L0 260 M0 395 Q90 420 80 512 L0 492",
      "M488 388 C400 385 400 490 488 490 L575 465 L548 410 Q530 390 488 388 M488 410 C435 412 435 465 488 467 C540 465 540 412 488 410 M558 425 L725 392 Q750 395 745 415 L575 460 M590 415 L573 345 Q595 315 615 340 L635 405 M597 465 L605 520 Q620 565 670 565 Q735 560 732 510 Q710 470 640 475 L600 480 M665 495 C625 495 625 545 665 545 C705 545 705 495 665 495 M603 450 L610 475 M643 445 L652 475 M611 434 l1 1",
      "M70 605 Q150 570 155 510 Q160 450 225 465 Q265 430 300 470 Q380 470 370 540 Q350 640 205 748 Q90 690 70 605 M204 478 c30 2 30 34 0 35 c-30 -1 -30 -33 0 -35 M264 462 c30 2 30 34 0 35 c-30 -1 -30 -33 0 -35 M318 495 c30 2 30 34 0 35 c-30 -1 -30 -33 0 -35 M248 512 c72 2 72 70 0 72 c-72 -2 -72 -70 0 -72",
      "M400 605 L497 552 L570 655 L530 682Z M410 612 L502 568 M570 655 L578 675 L545 697 L530 682",
      "M430 755 Q430 745 450 743 L745 700 Q765 705 762 720 Q760 728 740 732 L465 773 Q435 775 430 755 M615 722 L625 748 M635 712 L620 655 Q620 635 640 635 Q650 645 665 640 L700 643 Q720 650 725 670 L735 700 M625 670 Q640 685 660 668 Q690 665 720 665",
      "M840 738 L780 670 Q750 610 790 580 Q870 540 940 575 L968 600 L950 605 Q955 620 960 630 L980 640 Q975 655 965 655 Q980 690 950 705 L910 712 M820 620 L830 640 Q880 620 900 585 Q915 600 950 605 M820 625 L822 655 Q800 665 808 690 L830 685 L835 730 Q840 770 885 776 Q945 775 948 740 L938 712 M855 655 q25 -20 45 0 q-20 25 -45 0 M915 655 q10 -20 30 -5 q-10 20 -30 5 M822 660 L855 655 M895 675 q15 12 28 3",
      "M840 758 L760 775 Q700 790 705 895 L820 880 L800 770 M835 765 L855 838 L910 830 M715 895 Q720 1040 830 1048 Q930 1040 940 925 M820 880 L840 955 Q870 920 880 870 L910 850 M915 825 L998 812 L1028 918 L945 932 M910 830 L915 858 Q970 840 988 860 Q995 900 940 920 M962 738 L985 810 M948 738 Q1080 720 1120 765 M1000 740 L1090 900 L1115 995 L885 1035 M1055 830 L1100 825 M1105 945 L1130 943 M1115 995 L1200 985 M978 833 l1 1",
      "M1120 545 Q1025 560 1028 635 Q1040 720 1170 722 Q1200 720 1200 715 M1120 580 Q1060 590 1065 640 M1120 600 Q1090 610 1098 640 L1120 660",
      "M835 415 L935 438 Q890 440 872 465 Q860 430 835 415 M960 470 Q960 455 985 460 L1015 468 L1025 445 Q1050 432 1058 450 L1052 478 L1080 485 Q1085 500 1070 507 L1040 500 L1025 525 Q1000 530 985 518 L998 490 L965 482Z M1150 460 L1180 440",
      "M135 890 Q145 810 215 800 Q260 800 270 790 Q310 765 345 785 Q385 770 410 790 L420 803 Q475 820 478 860 L470 865 Q480 920 460 945 Q450 955 430 950 L165 913 Q130 910 135 890 M165 913 Q215 910 215 880 Q250 800 345 803 Q450 805 470 865 M235 835 Q180 840 180 870 L190 885 M170 905 L200 880 M200 850 l10 0 M222 838 l8 4 M418 874 l2 1 M398 904 l2 1 M437 898 l2 1",
      "M0 790 L22 795 Q20 815 0 825 M0 885 Q60 930 75 985 Q70 1015 0 1018 M5 965 L25 905 M0 1010 L42 935",
      "M540 848 L590 835 L598 872 L633 875 L600 930 L583 898 L560 895Z M390 1217 L442 1205 L450 1243 L485 1245 L448 1300 L432 1270 L410 1268Z",
      "M170 1085 Q160 1060 185 1045 Q240 1020 290 1045 L300 1058 L370 1048 M170 1085 L370 1048 L412 1165 Q410 1190 370 1200 L265 1220 M170 1085 L210 1185 M175 1030 L178 1010 Q210 990 245 1005 L248 1025 Q210 1040 175 1030 M205 1000 l5 30 M228 998 l5 28 M285 1030 Q310 985 350 990 Q385 1000 378 1045 M352 1060 L385 1150 Q395 1190 370 1200 M305 1015 l20 8 M140 1138 L160 1138 Q155 1180 210 1188 Q265 1190 275 1170 L297 1170 Q290 1225 205 1230 Q135 1215 140 1138",
      "M535 1060 Q510 1010 560 1008 Q660 1040 700 1100 L735 1190 L700 1210 Q600 1180 555 1110Z M540 1070 Q540 1030 615 1045 Q580 1005 560 1008 M545 1065 Q545 1025 580 1020 M650 1050 L790 1095 Q815 1110 795 1125 L720 1137 M545 1095 L545 1220 Q560 1240 580 1230 L622 1185 M675 1212 L690 1270 Q705 1275 720 1255 L740 1245 L700 1205 M712 1198 L760 1245 L740 1252 M735 1185 L800 1215 Q805 1230 790 1233 L750 1230",
      "M870 1190 L1020 1130 Q1038 1130 1035 1145 L1010 1265 Q1000 1275 990 1265 L950 1235 L990 1175 L935 1220 L875 1205 Q862 1200 870 1190Z",
      "M55 1270 L65 1245 L105 1240 L110 1235 L145 1235 L165 1275 L90 1303 L72 1298Z M213 1268 Q240 1280 225 1300 L240 1325 M190 1340 L255 1337 M190 1340 L202 1400 M175 1405 L283 1327 L410 1390 M215 1397 L365 1388 M195 1402 c42 2 42 38 0 40 c-42 -2 -42 -38 0 -40 M203 1445 c42 2 42 38 0 40 c-42 -2 -42 -38 0 -40 M208 1487 c42 2 42 38 0 40 c-42 -2 -42 -38 0 -40 M396 1385 c42 2 42 38 0 40 c-42 -2 -42 -38 0 -40 M403 1425 c42 2 42 38 0 40 c-42 -2 -42 -38 0 -40 M410 1468 c42 2 42 38 0 40 c-42 -2 -42 -38 0 -40 M262 1422 L338 1418 L345 1480 L270 1490Z M230 1440 L262 1440 M230 1468 L268 1465 M340 1440 L372 1437 M345 1465 L378 1462 M225 1528 L400 1508 M0 1345 L65 1365 L50 1418 L0 1425 M0 1365 L60 1375 M30 1420 L0 1480",
      "M460 1540 L555 1440 L627 1363 L695 1440 L720 1400 L788 1312 L850 1405 M555 1440 L600 1430 L605 1460 Q620 1470 625 1450 L640 1415 L670 1415 M730 1400 L765 1390 Q760 1430 775 1430 Q790 1420 800 1380 L845 1395",
    ],
  },
  {
    t: "translate(240 1360) scale(0.3333)",
    d: [
      "M390 135 L575 95 L570 80 M385 68 L420 60",
      "M470 225 Q475 195 500 200 L640 230 Q668 235 667 255 L650 365 Q640 385 620 380 L540 362 L495 385 Q480 380 488 355 L460 345 Q448 340 452 320Z M533 205 Q530 150 580 147 Q630 160 620 220 M507 260 L623 283 M500 292 L587 310",
      "M305 610 C370 470 480 435 570 440 Q680 445 750 520 M430 547 Q470 520 510 512 M583 513 Q630 520 663 542 M360 640 L378 603 M420 700 C460 600 520 575 580 580 C660 590 700 660 690 730 L640 860 M720 590 L745 625 M765 735 Q760 780 740 808 M825 775 L790 860 M543 652 C470 670 480 770 550 777 Q610 775 617 707 Q590 725 565 715 Q535 690 543 652 M518 860 Q525 830 545 830 Q575 835 575 860",
      "M165 580 Q165 550 195 550 L230 550 Q258 555 257 580 Q255 600 235 602 L190 602 Q165 600 165 580 M180 602 L180 650 M240 602 L240 620 M105 710 L250 622 Q280 605 305 622 L440 705 Q460 725 445 745 Q425 762 405 750 L278 665 L150 745 Q115 760 100 735 Q95 720 105 710 M172 740 L172 835 M385 742 L385 850 M240 733 L315 733 L315 808 L240 808Z M278 733 L278 808 M240 770 L315 770 M100 860 Q180 810 290 855 Q370 835 430 860",
      "M860 270 L760 235 L835 315 M825 360 L738 405 L850 412 M925 235 C820 240 800 350 850 412 M892 335 C895 390 930 410 1010 405 M925 232 L905 235 L915 140 L935 175 M905 80 L915 98 L1015 98",
      "M1000 780 Q960 780 935 820 Q930 850 955 845 Q990 820 1000 780 Q990 850 1020 858 Q1050 850 1035 790 M1040 780 Q1090 820 1110 865 M1050 775 Q1100 830 1100 780 M1170 870 L1200 840 M1170 870 L1200 878",
    ],
  },
  {
    t: "translate(350 1360) scale(0.4554 0.3333)",
    d: [
      "M652 810 Q655 850 690 862 Q665 875 660 908 Q650 875 618 860 Q645 845 652 810Z",
      "M1025 808 L1072 860 Q1075 895 1045 910 L995 855Z M1035 862 l1 1",
      "M1125 780 L1150 790 L1130 830 L1155 820 L1170 840 L1185 800 L1195 780 M1258 855 Q1255 830 1275 835 L1265 795 L1290 785",
      "M710 1040 Q700 940 740 870 Q800 810 870 850 Q915 880 905 940 Q920 960 910 1010 Q890 1010 885 975 Q870 950 820 960 Q780 975 790 1040 M740 870 L800 965 M805 835 L815 955 M870 850 L850 950 M712 935 L785 985 M705 985 L790 1010 M905 940 L880 965",
      "M962 1000 Q955 970 985 968 L1012 968 L1003 1050 Q990 1055 988 1045 L990 990 L978 1010Z M628 980 L690 1068 L628 1068",
      "M1075 1080 Q1040 1040 1055 1010 Q1080 990 1095 1000 Q1080 930 1110 910 Q1150 900 1150 920 Q1180 880 1215 890 Q1245 900 1245 935 Q1285 930 1290 975 Q1275 1000 1280 1010 Q1320 1040 1310 1080 M1125 1080 Q1115 970 1180 965 Q1250 970 1245 1080 M1135 1080 Q1140 1000 1165 990 Q1230 1000 1235 1060 M1158 1050 q10 -12 18 0 M1195 1040 q10 -8 15 4",
      "M1490 940 L1525 925 L1530 975 L1552 980 L1530 1055 L1515 1005 L1497 1000Z M1512 395 Q1515 440 1548 450 Q1525 465 1515 500 Q1505 460 1475 448 Q1505 435 1512 395Z M1458 310 Q1460 260 1475 245 Q1510 245 1515 275 Q1535 290 1530 320 Q1510 340 1490 320 Q1470 330 1458 325 M1458 400 L1475 378 L1458 425 M1458 580 Q1500 575 1568 605 M1458 605 Q1500 640 1568 655 M1458 690 Q1500 720 1568 700 M1458 800 Q1480 830 1490 820 L1500 720 M1458 0 L1555 70 M1500 0 L1490 30 M1530 20 L1520 50 M1558 35 L1545 75 M1435 90 Q1460 160 1540 165 L1568 160",
      "M610 780 L620 795 Q640 780 660 790 M670 780 Q740 840 790 780",
    ],
  },
  {
    t: "translate(840 880) scale(0.3333)",
    d: [
      "M90 120 L125 75 L165 35 Q190 25 240 40 L253 90 L240 140 L205 200 L150 195 L105 160Z M125 75 L225 180 M90 120 L190 205 M155 45 L245 125 M200 35 L250 85 M110 165 L205 65 M150 190 L235 90 M92 115 L150 60 L195 65 L240 50",
      "M0 240 Q10 150 62 98 Q115 150 100 220 L85 245 M62 98 Q20 180 35 300 M35 300 Q0 290 0 240 M35 300 Q100 190 230 225 Q210 280 160 300 M230 225 Q130 230 45 302",
      "M560 215 Q535 150 575 118 Q630 90 655 180 M590 200 Q575 145 600 143 Q615 145 622 185 M672 175 L560 215 Q530 235 535 290 L545 303 M565 355 Q600 390 672 370 M635 228 q24 2 25 24 q-2 24 -25 25 q-24 -2 -25 -25 q2 -22 25 -24 M632 275 L635 335 L672 320 M655 268 L672 290",
      "M335 300 Q360 270 390 300 M520 480 L555 485 L525 570 M650 460 L665 585 M650 460 L672 480 M525 645 Q650 640 655 755 M540 785 Q590 750 672 760 M515 755 Q550 800 540 870 L380 822 M540 850 L672 895 M595 870 L585 900 M625 880 L620 900 M115 820 L125 840 M345 820 L365 840",
    ],
  },
  {
    t: "translate(600 1700) scale(0.3333)",
    d: [
      "M175 158 Q220 115 280 115 Q292 135 285 158 M175 158 Q230 145 275 120 M440 158 Q445 130 470 125 L690 80 M625 98 L640 158 M470 145 l8 8 l15 -10",
      "M690 20 Q680 90 720 110 Q750 130 755 120 Q740 160 770 178 M785 0 C770 100 830 135 880 130 C920 125 945 70 935 0 M800 60 Q775 80 780 95 Q800 110 810 95 M945 40 Q970 40 965 60 Q950 80 935 65 M1040 0 Q1060 60 1005 75 Q1015 130 940 135 M775 188 L815 150 L885 188 L925 130 L1020 170 M1045 60 L1065 145 M835 35 l10 8 M885 25 l12 0 M855 60 q15 10 20 2 M870 82 q20 0 30 -18",
      "M1100 95 L1145 55 Q1160 50 1170 65 L1190 95 Q1190 110 1180 115 L1145 135 Q1130 135 1100 95 M1105 80 Q1085 45 1115 42 Q1135 50 1130 68",
      "M1305 210 L1392 155 M1370 190 Q1375 220 1392 225 M1345 265 Q1392 270 1392 330 M1360 300 l15 12 M1345 395 Q1370 410 1392 385 M1300 450 Q1340 480 1392 440",
      "M905 325 L905 285 L940 275 M885 325 L912 318 M870 440 L920 430 M840 485 L885 530 M485 575 L520 615 M520 605 L985 520 M640 615 L1010 545 M1080 615 L1085 585 L1240 560 M1100 615 L1105 600 L1245 578 M0 585 Q35 575 60 575 Q80 595 55 615",
      "M230 0 Q250 60 300 68 M300 68 Q310 30 270 15 L275 0 M605 0 L600 25 Q615 45 625 20 L628 0 M1315 0 L1340 30 L1355 0",
    ],
  },
  {
    t: "translate(0 1620) scale(0.4209 0.3333)",
    d: [
      "M142 42 c0 -40 50 -40 50 0 c0 40 -50 40 -50 0 M165 68 L330 40 Q360 20 345 -10 M70 100 Q55 140 85 160 Q110 155 105 140 M119 190 Q90 220 95 280 L119 340",
      "M0 380 Q70 360 90 420 Q95 450 65 500 M75 380 q10 -15 20 0 q-8 18 -20 0 M85 372 L115 345 M95 385 L115 380 L100 410 M90 400 Q105 430 80 470 M0 470 q15 0 10 20 M15 455 q0 25 20 20 M0 540 L15 560 L0 605 M0 570 L15 575 M0 720 Q30 715 55 690",
      "M45 760 Q80 755 85 740 M45 760 Q80 775 90 808 Q95 790 105 780 M150 857 Q220 790 275 830 L285 857 M420 815 Q450 870 475 850 Q495 830 500 815 M885 815 L960 857 M1050 815 L1040 857 M1098 822 c20 2 20 34 0 35 c-20 -1 -20 -33 0 -35 M1225 815 L1235 857 L1300 815 M1270 857 L1360 815 M1430 815 L1410 857 M1480 815 L1460 857",
      "M350 363 L355 398 M375 365 Q420 395 470 365 M450 370 L440 398 M215 398 q15 -20 25 0 M560 370 Q580 390 590 398 M730 398 q10 -15 20 0 M780 398 Q810 370 850 370 M890 398 Q960 340 1030 398 M1180 365 Q1220 395 1245 390 M1300 385 L1340 370 M1400 398 L1425 370",
    ],
  },
];

const Wallpaper = () => (
  <WallpaperSvg viewBox="0 0 1064 1910" aria-hidden="true">
    {rings.map(([x, y, r], i) => <circle key={i} cx={x} cy={y} r={r} />)}
    {patches.map((p, i) => (
      <g key={i} transform={p.t}>
        {p.d.map((d, j) => <path key={j} d={d} />)}
      </g>
    ))}
  </WallpaperSvg>
);

/* ---------- chart ---------- */

const buckets: [string, number][] = [
  ["0-10", 0], ["11-20", 1], ["21-30", 4], ["31-40", 10], ["41-50", 7],
  ["51-60", 14], ["61-70", 12], ["71-80", 3], ["81-90", 3], ["91 <", 7],
];
const baseY = 274;
const unit = 16.82;
const colX = (i: number) => 109.5 + i * 54.55;

const Chart = () => (
  <ChartSvg viewBox="0 0 668 338" preserveAspectRatio="xMidYMid meet" role="img" aria-label="Grade distribution">
    {[0, 2, 4, 6, 8, 10, 12, 14].map((v) => (
      <g key={v}>
        <line x1="67" x2="628" y1={baseY - v * unit} y2={baseY - v * unit} stroke={v ? "#d4d4d4" : "#bdbdbd"} strokeWidth="2" />
        <text x="65" y={baseY - v * unit + 6.5}>{v}</text>
      </g>
    ))}
    <line x1="81" x2="81" y1={baseY - 14 * unit} y2={baseY} stroke="#c4c4c4" strokeWidth="2" />
    {buckets.map(([label, n], i) => (
      <g key={label}>
        <line x1={colX(i)} x2={colX(i)} y1={baseY - 14 * unit} y2={baseY + 13} stroke="#dedede" strokeWidth="1.5" />
        <rect x={colX(i) - 19.5} width="39" y={baseY - n * unit} height={n * unit} fill={i === 9 ? "#2458ff" : "#b0e2e2"} />
        <text fontSize="19" transform={`translate(${colX(i) + 3} ${baseY + 21}) rotate(-35)`}>{label}</text>
      </g>
    ))}
  </ChartSvg>
);

const BarIcon = () => (
  <svg viewBox="0 0 22 18" aria-hidden="true">
    <path d="M0 0h3v15h19v3H0z M5 8h3v5H5z M9 3h3v10H9z M13 6h3v7h-3z M17 1h3v12h-3z" />
  </svg>
);

/* ---------- messages ---------- */

type Msg = {
  text: string;
  time: string;
  emoji?: React.ReactNode[];
  out?: boolean;
  stack?: boolean;
  tail?: boolean;
  apart?: boolean;
  space?: number;
};

const messages: Msg[] = [
  { text: "יש תיקון", time: "08:42", emoji: [<Pray />], apart: true, space: 76 },
  { text: "היי שירי, איזה אלופה! כל הכבוד", time: "09:11", emoji: [<Party id="party" />], out: true, stack: true, tail: true, space: 30 },
  { text: "תיקון הכי שווה", time: "09:13", emoji: [<Heart />, <Smile />], out: true },
  { text: "מה זה הממוצע הנמוך", time: "09:13", out: true },
  { text: "הרבה נכשלו", time: "09:14", out: true },
  { text: "את תותחית", time: "09:14", emoji: [<Grin />], out: true },
  { text: "חצי כיתה מועד ג", time: "09:16", emoji: [<Melting />], apart: true, tail: true, space: 30 },
];

const Message = ({ m }: { m: Msg }) => (
  <Row $out={m.out} $space={m.space}>
    <Bubble $out={m.out} $stack={m.stack} $tail={m.tail}>
      {m.tail && (
        <Tail $out={m.out} viewBox="0 0 21 33" aria-hidden="true">
          <path d="M-1 0 L15 0 Q23 1 20 9 L0 33 L-1 33Z" />
        </Tail>
      )}
      <Text $out={m.out} $stack={m.stack}>
        <span>{m.text}</span>
        {m.emoji?.map((e, i) => <EmojiSlot key={i} $apart={m.apart}>{e}</EmojiSlot>)}
      </Text>
      <Meta $out={m.out}>
        <time>{m.time}</time>
        {m.out && <Ticks />}
      </Meta>
    </Bubble>
  </Row>
);

const SharedResults = () => (
  <Row $space={0}>
    <PhotoBubble>
      <Photo>
        <Grade>
          <GradeText>
            <GradeTitle>212.6862ב01 ציון סופי למועד 02</GradeTitle>
            <GradeLine $strong><b>ציון:</b> 96</GradeLine>
            <GradeLine><b>ממוצע:</b> 57.033</GradeLine>
            <GradeLine><b>סטיית תקן:</b> 20.586</GradeLine>
            <GradeLine><b>תאריך:</b> 24/08/2025</GradeLine>
          </GradeText>
          <GraphButton type="button"><BarIcon />סגור</GraphButton>
        </Grade>
        <Chart />
        <Divider />
        <Grade>
          <GradeText>
            <GradeTitle>212.6862ב01 בחינה מועד ב</GradeTitle>
            <GradeLine $strong><b>ציון:</b> 96</GradeLine>
            <GradeLine><b>ממוצע:</b> 54.311</GradeLine>
            <GradeLine><b>סטיית תקן:</b> 22.081</GradeLine>
            <GradeLine><b>תאריך:</b> 18/08/2025</GradeLine>
          </GradeText>
          <GraphButton type="button"><BarIcon />הצג גרף</GraphButton>
        </Grade>
        <Shade />
        <PhotoTime>08:42</PhotoTime>
      </Photo>
      <Reaction type="button" aria-label="Reaction">
        <Party id="party-small" size={50} />
      </Reaction>
    </PhotoBubble>
    <ForwardButton type="button" aria-label="Forward">
      <svg viewBox="0 0 62 42" aria-hidden="true">
        <path d="M4 38 V30 Q4 17 17 17 H41 M28 4 L42 17 L28 31 M43 4 L57 17 L43 31" />
      </svg>
    </ForwardButton>
  </Row>
);

export default function App() {
  return (
    <>
      <GlobalStyle />
      <Screen>
        <Conversation>
          <Wallpaper />
          <MessageList>
            <SharedResults />
            {messages.map((m) => <Message key={m.text} m={m} />)}
            <ScrollDown type="button" aria-label="Scroll to latest">
              <svg viewBox="0 0 36 40" aria-hidden="true">
                <path d="M4 3 L18 17 L32 3 M4 21 L18 35 L32 21" />
              </svg>
            </ScrollDown>
          </MessageList>
          <Composer onSubmit={(e) => e.preventDefault()}>
            <Field>
              <IconButton type="button" aria-label="Stickers">
                <svg viewBox="0 0 62 62" aria-hidden="true">
                  <path d="M22 4 H40 Q58 4 58 22 V34 Q58 40 54 44 L42 55 Q39 58 34 58 H22 Q4 58 4 40 V22 Q4 4 22 4Z" strokeWidth="6" />
                  <path d="M35 57 V45 Q35 36 44 36 H57" strokeWidth="5" />
                  <path d="M18 36 H34 V45 Q22 46 18 36Z" fill="#8b9498" strokeWidth="2" />
                  <circle cx="21" cy="22" r="4" fill="#8b9498" stroke="none" />
                  <circle cx="42" cy="22" r="4" fill="#8b9498" stroke="none" />
                </svg>
              </IconButton>
              <MessageInput aria-label="Message" placeholder="Message" />
              <IconButton type="button" aria-label="Attach">
                <svg viewBox="0 0 62 62" aria-hidden="true">
                  <path d="M46.500 17 V43 A15.500 15.500 0 0 1 15.500 43 V15 A10.500 10.500 0 0 1 36.500 15 V42 A5.200 5.200 0 0 1 26 42 V17" />
                </svg>
              </IconButton>
              <IconButton type="button" aria-label="Camera" $gap={80}>
                <svg viewBox="0 0 62 62" aria-hidden="true">
                  <path d="M5 12 H20 L25 6 H38 L43 12 H57 V53 H5Z" />
                  <circle cx="31" cy="32" r="10.500" />
                </svg>
              </IconButton>
            </Field>
            <MicButton type="button" aria-label="Record voice message">
              <svg viewBox="0 0 42 58" aria-hidden="true">
                <rect x="12" y="1" width="18" height="36" rx="9" fill="#0a0f13" stroke="none" />
                <path d="M3 30 Q6 45 21 45 Q36 45 39 30 M21 46 V54" />
              </svg>
            </MicButton>
          </Composer>
          <ChatHead type="button" aria-label="Open chats">
            <svg viewBox="0 0 32 32" aria-hidden="true">
              <path d="M14 1 H22 Q30 1 30 10 Q30 19 25 21 L8 12 Q7 1 14 1Z" fill="#8fbdfb" />
              <path d="M9 9 H17 Q25 9 25 18 Q25 28 16 28 H8 L5 30 L5 27 Q1 24 1 18 Q1 9 9 9Z" fill="#fff" />
            </svg>
          </ChatHead>
        </Conversation>
        <NavBar>
          <NavButton type="button" aria-label="Recent apps">
            <svg viewBox="0 0 52 52" aria-hidden="true"><path d="M6 5 V47 M25 5 V47 M44 5 V47" /></svg>
          </NavButton>
          <NavButton type="button" aria-label="Home">
            <svg viewBox="0 0 52 52" aria-hidden="true"><rect x="4" y="4" width="44" height="44" rx="17" strokeWidth="5" /></svg>
          </NavButton>
          <NavButton type="button" aria-label="Back">
            <svg viewBox="0 0 52 52" aria-hidden="true"><path d="M39 4 L13 26 L39 48" /></svg>
          </NavButton>
        </NavBar>
      </Screen>
    </>
  );
}
